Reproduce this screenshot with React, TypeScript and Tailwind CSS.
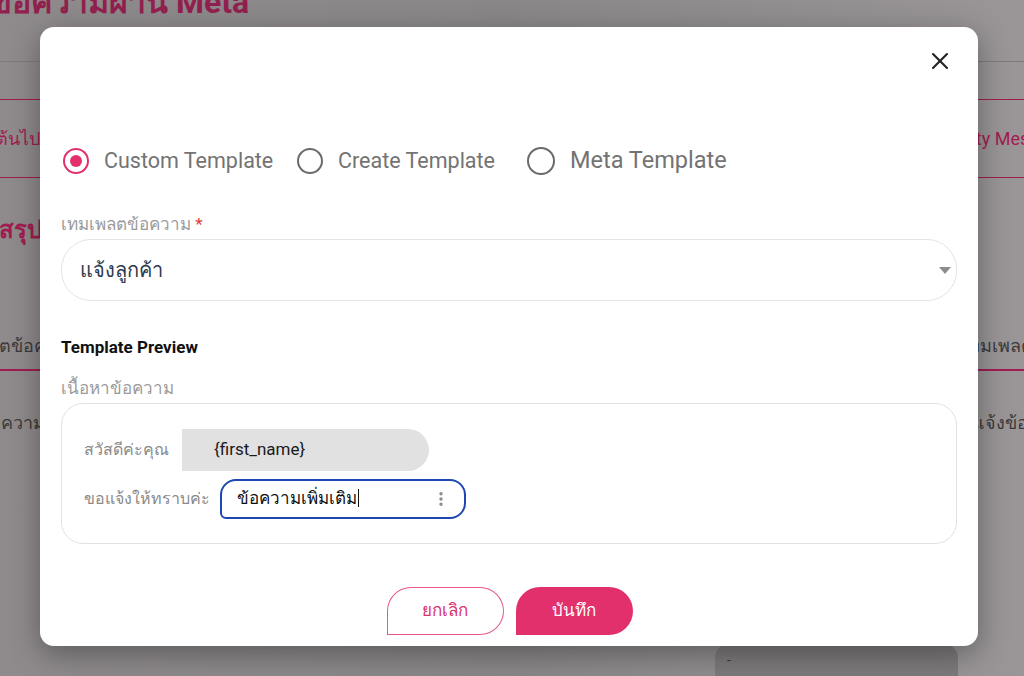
import React, { useState } from 'react';
import { X, EllipsisVertical } from 'lucide-react';

type TemplateKind = 'custom' | 'create' | 'meta';

const options: { id: TemplateKind; label: string; text: string; radio: string }[] = [
  { id: 'custom', label: 'Custom Template', text: 'text-[21.5px] w-[193px]', radio: 'h-[26px] w-[26px]' },
  { id: 'create', label: 'Create Template', text: 'text-[21.5px] w-[189px]', radio: 'h-[26px] w-[26px]' },
  { id: 'meta', label: 'Meta Template', text: 'text-[23.5px]', radio: 'h-[28px] w-[28px]' },
];

const Radio: React.FC<{ checked: boolean; size: string }> = ({ checked, size }) => (
  <span
    className={`flex shrink-0 items-center justify-center rounded-full border-[2.5px] ${size} ${
      checked ? 'border-[#e2306c]' : 'border-[#6b6b6b]'
    }`}
  >
    {checked && <span className="h-[12px] w-[12px] rounded-full bg-[#e2306c]" />}
  </span>
);

// dimmed page that sits behind the dialog
const BackdropPage: React.FC = () => (
  <div className="flex h-[676px] w-[1024px] flex-col bg-gradient-to-r from-[#8f8b8c] via-[#8a8788] to-[#9a9697] text-[#3b3939]">
    <div className="h-[62px] border-b border-[#7f7b7c]">
      <p className="-ml-[176px] -mt-[16px] text-[32px] font-bold leading-[36px] text-[#92204e]">
        ตั้งค่าการส่งข้อความผ่าน Meta
      </p>
    </div>
    <div className="mt-[37px] flex h-[79px] items-center justify-between overflow-hidden border-y border-[#a11c50] text-[18px] text-[#a11c50]">
      <span className="-ml-[112px]">ตั้งแต่วันนี้เป็นต้นไป</span>
      <span className="-mr-[44px]">Priority Message</span>
    </div>
    <p className="mt-[34px] -ml-[62px] text-[24px] font-bold text-[#a11c50]">ข้อมูลสรุป</p>
    <div className="mt-[74px] flex h-[49px] items-center justify-between overflow-hidden border-b-2 border-[#a11c50] text-[18px]">
      <span className="-ml-[60px]">เทมเพลตข้อความ</span>
      <span className="-mr-[76px]">เทมเพลตข้อความ</span>
    </div>
    <div className="mt-[38px] flex items-center justify-between overflow-hidden text-[18px]">
      <span className="-ml-[22px]">ข้อความ</span>
      <span className="-mr-[48px]">แจ้งข้อความ</span>
    </div>
    <div className="mt-auto ml-[715px] h-[32px] w-[243px] rounded-t-[14px] bg-[#7d7a7b] px-[12px] pt-[6px] text-[14px]">-</div>
  </div>
);

export default function App() {
  const [kind, setKind] = useState<TemplateKind>('custom');

  return (
    <div
      className="relative h-[676px] w-[1024px] overflow-hidden"
      style={{ fontFamily: 'Roboto, "Noto Sans", "DejaVu Sans", sans-serif' }}
    >
      <BackdropPage />

      <div className="absolute left-[40px] top-[27px] flex h-[619px] w-[938px] flex-col rounded-[14px] bg-white px-[21px] pt-[27px] shadow-[0_8px_30px_rgba(0,0,0,0.35)]">
        <div className="flex h-[14px] items-center justify-end pr-[10px]">
          <button className="-mr-[7px] text-[#222]" aria-label="close">
            <X size={28} strokeWidth={1.8} />
          </button>
        </div>

        <div className="mt-[79px] flex h-[28px] items-center pl-[2px]">
          {options.map(o => (
            <button key={o.id} onClick={() => setKind(o.id)} className="flex items-center gap-[15px]">
              <Radio checked={kind === o.id} size={o.radio} />
              <span className={`text-left text-[#737373] ${o.text}`}>{o.label}</span>
            </button>
          ))}
        </div>

        <p className="mt-[37px] text-[17px] leading-[24px] text-[#9b9b9b]">
          เทมเพลตข้อความ <span className="text-[#e53935]">*</span>
        </p>
        <div className="mt-[3px] flex h-[62px] items-center justify-between rounded-[30px] border border-[#e4e4e4] pl-[18px] pr-[5px]">
          <span className="text-[20px] text-[#2d3a4e]">แจ้งลูกค้า</span>
          <svg width="12" height="7" viewBox="0 0 12 7">
            <polygon points="0,0 12,0 6,7" fill="#8c8c8c" />
          </svg>
        </div>

        <p className="mt-[34px] text-[17px] font-bold leading-[24px] text-[#111]">Template Preview</p>
        <p className="mt-[17px] text-[17px] leading-[24px] text-[#9b9b9b]">เนื้อหาข้อความ</p>

        <div className="mt-[3px] flex h-[141px] flex-col gap-[8px] rounded-[22px] border border-[#e2e2e2] pl-[22px] pt-[25px]">
          <div className="flex items-center gap-[7px]">
            <span className="w-[91px] shrink-0 whitespace-nowrap text-[16px] text-[#8a8a8a]">สวัสดีค่ะคุณ</span>
            <span className="flex h-[42px] w-[247px] items-center rounded-r-full rounded-tl-[22px] bg-[#e2e1e1] pl-[32px] text-[17px] text-[#1a1a1a]">
              {'{first_name}'}
            </span>
          </div>
          <div className="flex items-center gap-[7px]">
            <span className="w-[129px] shrink-0 whitespace-nowrap text-[16px] text-[#8a8a8a]">ขอแจ้งให้ทราบค่ะ</span>
            <div className="flex h-[40px] w-[246px] items-center justify-between rounded-[16px] rounded-bl-[6px] border-2 border-[#1d47b5] pl-[15px] pr-[14px]">
              <span className="text-[17px] font-medium text-[#111]">
                ข้อความเพิ่มเติม<span className="ml-[1px] inline-block h-[18px] w-[1px] translate-y-[3px] bg-[#111]" />
              </span>
              <EllipsisVertical size={18} strokeWidth={2.5} className="text-[#8a8a8a]" />
            </div>
          </div>
        </div>

        <div className="mt-[43px] flex justify-center gap-[12px] pl-[1px]">
          <button className="h-[48px] w-[117px] rounded-full rounded-bl-[2px] border-[1.5px] border-[#e8578a] text-[17px] text-[#d9336c]">
            ยกเลิก
          </button>
          <button className="h-[48px] w-[117px] rounded-full rounded-bl-[2px] bg-[#e2306c] text-[17px] text-white">
            บันทึก
          </button>
        </div>
      </div>
    </div>
  );
}
